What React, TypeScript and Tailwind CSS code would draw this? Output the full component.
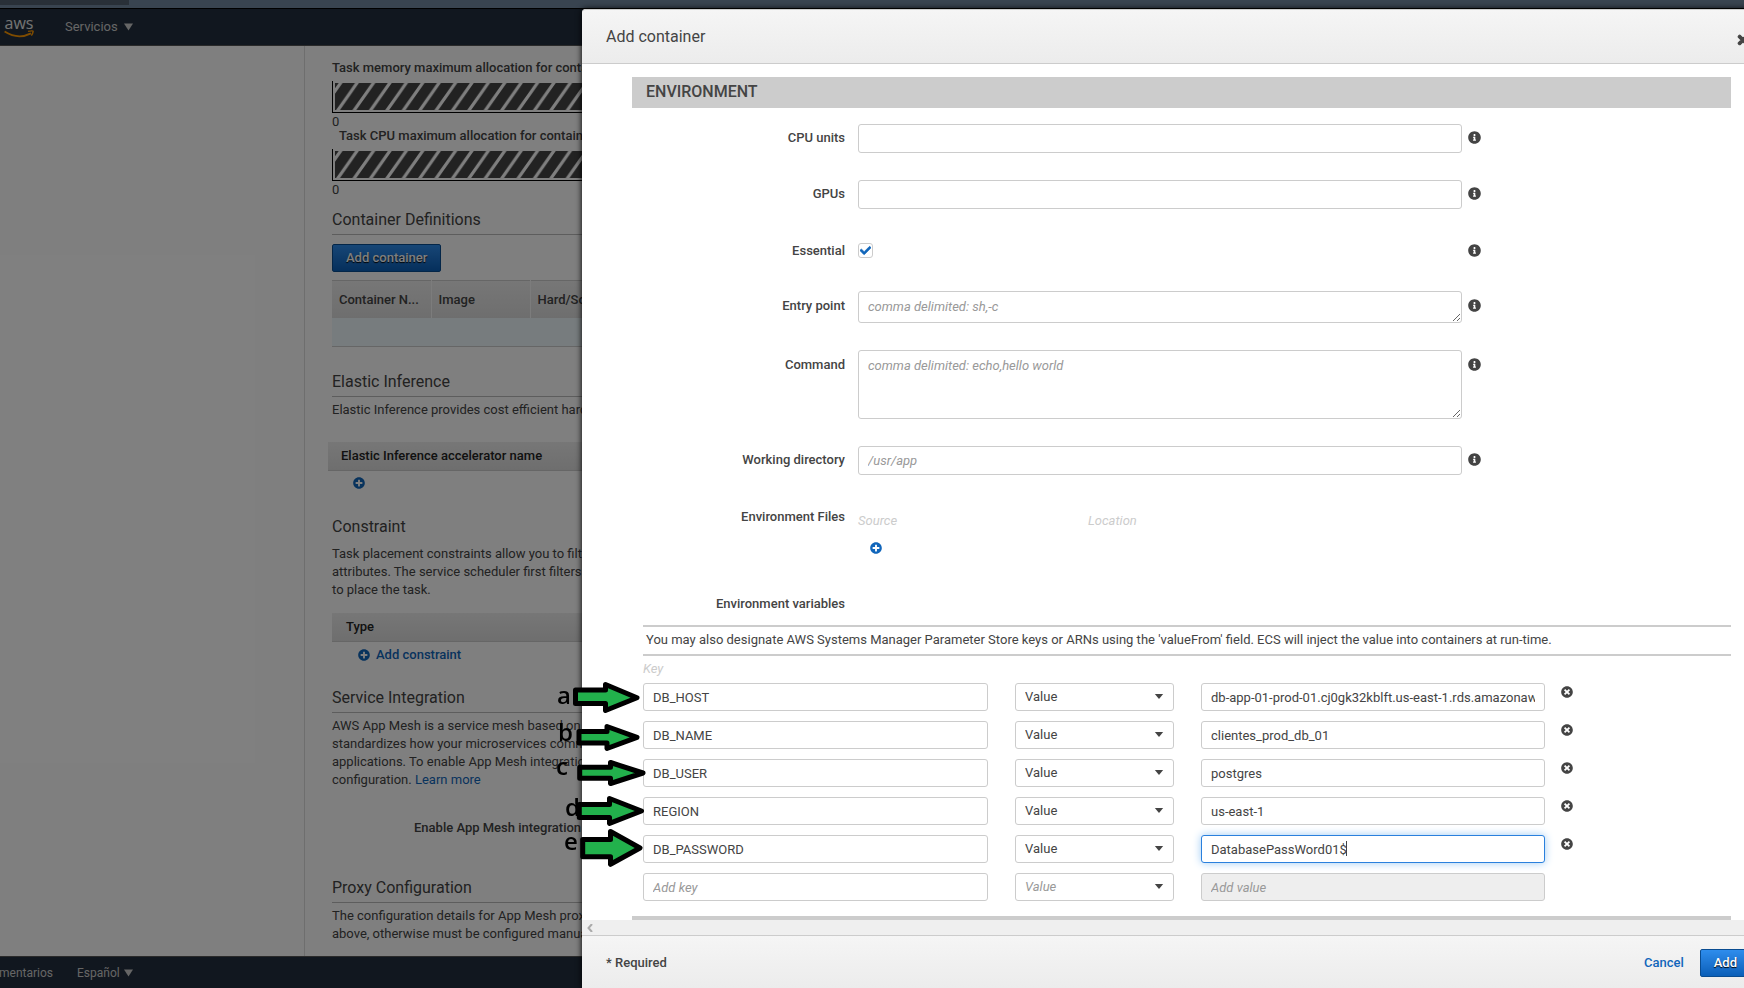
import { useState } from "react";
import type { ReactNode } from "react";
import { FaCheck, FaPlusCircle, FaInfoCircle, FaTimesCircle, FaTimes } from "react-icons/fa";

const fieldClass =
  "block w-full rounded-[3px] border border-[#ccc] bg-white px-[9px] text-[13px] text-[#444] outline-none placeholder:italic placeholder:text-[#999]";

const initialVariables = [
  { key: "DB_HOST", value: "db-app-01-prod-01.cj0gk32kblft.us-east-1.rds.amazonaws.com" },
  { key: "DB_NAME", value: "clientes_prod_db_01" },
  { key: "DB_USER", value: "postgres" },
  { key: "REGION", value: "us-east-1" },
  { key: "DB_PASSWORD", value: "DatabasePassWord01$" },
];

const arrows = [
  { letter: "a", place: "left-[557px] top-[679px]", points: "575.5,690 605.5,690 605.5,684.5 637,697.7 605.5,710.5 605.5,703.5 575.5,703.5" },
  { letter: "b", place: "left-[558px] top-[716px]", points: "579,731.5 607,731.5 607,726.5 637,737.3 607,748.5 607,743 579,743" },
  { letter: "c", place: "left-[556px] top-[750px]", points: "579.7,767.3 610.5,767.3 610.5,762.5 643,773 610.5,783.5 610.5,778.3 579.7,778.3" },
  { letter: "d", place: "left-[565px] top-[791px]", points: "579.3,804.5 609.5,804.5 609.5,798.5 641.5,811 609.5,823.3 609.5,817.5 579.3,817.5" },
  { letter: "e", place: "left-[564px] top-[825px]", points: "582.7,839.5 610.5,839.5 610.5,831.5 640,848 610.5,864.3 610.5,856.7 582.7,856.7" },
];

function Caret({ className }: { className: string }) {
  return (
    <svg viewBox="0 0 10 8" className={className} aria-hidden="true">
      <path d="M0 0h10L5 8z" fill="currentColor" />
    </svg>
  );
}

function AwsLogo() {
  return (
    <a href="#" aria-label="AWS" className="flex w-[30px] flex-col items-center">
      <span className="font-['Open_Sans',sans-serif] text-[16px] leading-[13px] font-medium text-[#e8e8e8]">aws</span>
      <svg viewBox="0 0 30 8" className="h-2 w-[30px]" fill="none" stroke="#ff9900" aria-hidden="true">
        <path d="M.6 1.6 Q14 10 27 3.4" strokeWidth="1.8" />
        <path d="M24 1.4 Q30 .1 29 2 Q28.6 4 27.4 5.6" strokeWidth="1.4" />
      </svg>
    </a>
  );
}

function MemoryBar({ title, indent }: { title: string; indent?: boolean }) {
  const id = indent ? "cpu-stripes" : "memory-stripes";
  return (
    <div className="h-[68px]">
      <div className={indent ? "pl-[7px] text-[13px] leading-[26px] font-medium" : "text-[13px] leading-[26px] font-medium"}>{title}</div>
      <div className="h-[32px] border-b border-l border-black pt-[2px] pl-[2px]">
        <svg className="h-[27px] w-full" aria-hidden="true">
          <defs>
            <pattern id={id} width="16.4" height="27" patternUnits="userSpaceOnUse">
              <rect width="17" height="27" fill="#444" />
              <path d="M1.6 29 L23.4 -2 M-14.8 29 L7 -2 M-31.2 29 L-9.4 -2 M18 29 L39.8 -2" stroke="#fff" strokeWidth="3.2" />
            </pattern>
          </defs>
          <rect width="100%" height="27" fill={`url(#${id})`} />
        </svg>
      </div>
      <div className="text-[13px] leading-[18px]">0</div>
    </div>
  );
}

function Page() {
  return (
    <div className="flex h-full flex-col bg-white text-[#444]">
      <header className="flex h-[37px] shrink-0 items-center gap-[31px] border-b border-[#555] bg-[#232f3e] pl-1 text-[#ccc]">
        <AwsLogo />
        <button type="button" className="flex items-center gap-[6px] text-[13px]">
          Servicios
          <Caret className="h-2 w-[9px]" />
        </button>
      </header>
      <div className="flex min-h-0 flex-1">
        <nav className="w-[305px] shrink-0 border-r border-[#ddd]" />
        <main className="min-w-0 flex-1 overflow-hidden pt-[9px] pl-[27px] text-[13px] whitespace-nowrap">
          <MemoryBar title="Task memory maximum allocation for container memory reservation" />
          <MemoryBar title="Task CPU maximum allocation for containers" indent />

          <h2 className="mt-[17px] border-b border-[#bbb] pb-[2px] text-[16px] leading-[24px]">Container Definitions</h2>
          <button type="button" className="mt-[9px] block h-[28px] rounded-[2px] border border-[#094c91] bg-gradient-to-b from-[#2e8ded] to-[#0a5fb8] px-[13px] font-medium text-white [text-shadow:0_1px_1px_#000]">
            Add container
          </button>
          <table className="mt-2 w-full table-fixed border-t border-b border-[#ccc] text-left">
            <thead>
              <tr className="h-[37px] bg-gradient-to-b from-[#eee] to-[#ddd]">
                <th className="w-[99px] border-r border-[#f8f8f8] px-[7px] font-medium">Container N...</th>
                <th className="w-[99px] border-r border-[#f8f8f8] px-[7px] font-medium">Image</th>
                <th className="px-[7px] font-medium">Hard/Soft memory limits (MiB)</th>
              </tr>
            </thead>
            <tbody>
              <tr className="h-[29px] bg-[#eff8fd]">
                <td colSpan={3} />
              </tr>
            </tbody>
          </table>

          <h2 className="mt-[23px] border-b border-[#bbb] pb-[2px] text-[16px] leading-[24px]">Elastic Inference</h2>
          <p className="mt-[4px] leading-[18px]">Elastic Inference provides cost efficient hardware acceleration</p>
          <div className="mt-[23px] -ml-1 h-[29px] border-b border-[#ccc] bg-gradient-to-b from-[#eee] to-[#ddd] pl-[13px] leading-[28px] font-medium text-[#222]">
            Elastic Inference accelerator name
          </div>
          <button type="button" aria-label="Add accelerator" className="mt-[6px] ml-[21px] block text-[#1166bb]">
            <FaPlusCircle size={12} />
          </button>

          <h2 className="mt-[26px] text-[16px] leading-[24px]">Constraint</h2>
          <p className="mt-[6px] leading-[18px]">
            Task placement constraints allow you to filter the container instances
            <br />
            attributes. The service scheduler first filters the container instances
            <br />
            to place the task.
          </p>
          <div className="mt-[14px] h-[29px] border-b border-[#ccc] bg-gradient-to-b from-[#eee] to-[#ddd] pl-[14px] leading-[28px] font-medium text-[#222]">
            Type
          </div>
          <button type="button" className="mt-1 ml-[26px] flex h-[18px] items-center gap-[6px] font-medium text-[#1166bb]">
            <FaPlusCircle size={12} />
            Add constraint
          </button>

          <h2 className="mt-[22px] border-b border-[#bbb] pb-[2px] text-[16px] leading-[24px]">Service Integration</h2>
          <p className="mt-[4px] leading-[18px]">
            AWS App Mesh is a service mesh based on the Envoy proxy that
            <br />
            standardizes how your microservices communicate with
            <br />
            applications. To enable App Mesh integration, complete the
            <br />
            configuration.{" "}
            <a href="#" className="text-[#1166bb]">
              Learn more
            </a>
          </p>
          <div className="mt-[30px] ml-[82px] leading-[18px] font-medium">Enable App Mesh integration</div>

          <h2 className="mt-[39px] border-b border-[#bbb] pb-[2px] text-[16px] leading-[24px]">Proxy Configuration</h2>
          <p className="mt-[4px] leading-[18px]">
            The configuration details for App Mesh proxy are listed
            <br />
            above, otherwise must be configured manually.
          </p>
        </main>
      </div>
      <footer className="flex h-8 shrink-0 items-center border-t border-[#555] bg-[#232f3e] text-[12px] text-[#ccc]">
        <div className="flex w-[53px] justify-end overflow-hidden">
          <a href="#">Comentarios</a>
        </div>
        <button type="button" className="ml-6 flex items-center gap-[4px]">
          Español
          <Caret className="h-2 w-[9px]" />
        </button>
      </footer>
    </div>
  );
}

function FormRow({
  label,
  htmlFor,
  info = true,
  lowered = false,
  children,
}: {
  label: string;
  htmlFor?: string;
  info?: boolean;
  lowered?: boolean;
  children?: ReactNode;
}) {
  return (
    <div className={`grid grid-cols-[226px_minmax(0,604fr)_minmax(0,269fr)] ${lowered ? "[&>:is(label,:last-child)]:mt-px" : ""}`}>
      <label htmlFor={htmlFor} className="pr-[13px] text-right leading-[27px] font-medium">
        {label}
      </label>
      <div>{children}</div>
      <div className="pt-[7px] pl-[6px]">
        {info && (
          <button type="button" aria-label={`About ${label}`} className="block">
            <FaInfoCircle size={13} />
          </button>
        )}
      </div>
    </div>
  );
}

function VariableRow({ name, value, focused = false, onRemove }: { name?: string; value?: string; focused?: boolean; onRemove?: () => void }) {
  const isNew = name === undefined;
  const [restingCaret, setRestingCaret] = useState(focused);
  const hideRestingCaret = () => setRestingCaret(false);
  return (
    <div className="grid grid-cols-[minmax(0,372fr)_186px_minmax(0,344fr)_minmax(0,186fr)]">
      <div className="pr-[27px]">
        <input aria-label="Key" defaultValue={name} placeholder="Add key" className={`${fieldClass} h-[28px]`} />
      </div>
      <div className="relative mr-[27px] h-[28px]">
        <select
          aria-label="Value type"
          className={`${fieldClass} h-[28px] appearance-none ${isNew ? "text-[#999] italic" : ""}`}
        >
          <option>Value</option>
          <option>ValueFrom</option>
        </select>
        <svg viewBox="0 0 10 6" className="pointer-events-none absolute top-[11px] right-[10px] h-[5px] w-[10px]" aria-hidden="true">
          <path d="M0 0h10L5 6z" fill="#444" />
        </svg>
      </div>
      <div className="relative">
        <input
          aria-label="Value"
          defaultValue={value}
          placeholder="Add value"
          disabled={isNew}
          autoFocus={focused}
          onKeyDown={hideRestingCaret}
          onMouseDown={hideRestingCaret}
          onBlur={hideRestingCaret}
          className={`${fieldClass} h-[28px] focus:border-[#2a80dd] focus:shadow-[0_0_8px_#9ccaf5] disabled:bg-[#eee] ${restingCaret ? "caret-transparent" : ""}`}
        />
        {restingCaret && <span className="absolute top-[6px] left-[145px] h-[15px] w-px bg-[#444]" />}
      </div>
      <div className="pt-[3px] pl-4">
        {!isNew && (
          <button type="button" aria-label={`Remove ${name}`} className="block" onClick={onRemove}>
            <FaTimesCircle size={12} />
          </button>
        )}
      </div>
    </div>
  );
}

function AddContainerDialog() {
  const [variables, setVariables] = useState(initialVariables);
  const [essential, setEssential] = useState(true);
  return (
    <section
      role="dialog"
      aria-label="Add container"
      className="absolute top-[9px] -right-[30px] bottom-0 left-[582px] flex flex-col rounded-tl-[4px] bg-white text-[13px] text-[#444] shadow-[0_0_6px_#000]"
    >
      <header className="flex h-[55px] shrink-0 items-center justify-between rounded-tl-[4px] border-t border-b border-[#ccc] bg-gradient-to-b from-[#f5f5f5] to-[#ececec] pr-6 pl-6">
        <h1 className="text-[16px]">Add container</h1>
        <button type="button" aria-label="Close" className="pt-[6px]">
          <FaTimes size={14} stroke="currentColor" strokeWidth={40} />
        </button>
      </header>

      <div className="flex min-h-0 flex-1 flex-col overflow-hidden pt-[13px] pr-[43px] pl-[50px]">
        <h2 className="h-[31px] shrink-0 bg-[#ccc] pl-[14px] text-[16px] leading-[29px] font-medium">ENVIRONMENT</h2>
        <div className="mt-4 flex flex-col gap-[27px]">
          <FormRow label="CPU units" htmlFor="cpu">
            <input id="cpu" className={`${fieldClass} h-[29px]`} />
          </FormRow>
          <FormRow label="GPUs" htmlFor="gpus">
            <input id="gpus" className={`${fieldClass} h-[29px]`} />
          </FormRow>
          <FormRow label="Essential" htmlFor="essential" lowered>
            <span className="relative mt-[7px] block h-[21px] w-[15px]">
              <input
                id="essential"
                type="checkbox"
                checked={essential}
                onChange={(event) => setEssential(event.target.checked)}
                className="block h-[15px] w-[15px] appearance-none rounded-[3px] border border-[#ccc]"
              />
              {essential && (
                <FaCheck size={11} stroke="currentColor" strokeWidth={30} className="pointer-events-none absolute top-[2px] left-[2px] text-[#1166bb]" />
              )}
            </span>
          </FormRow>
          <FormRow label="Entry point" htmlFor="entry" lowered>
            <textarea id="entry" placeholder="comma delimited: sh,-c" className={`${fieldClass} h-[32px] py-[6px] leading-[18px]`} />
          </FormRow>
          <FormRow label="Command" htmlFor="command" lowered>
            <textarea id="command" placeholder="comma delimited: echo,hello world" className={`${fieldClass} h-[69px] py-[6px] leading-[18px]`} />
          </FormRow>
          <FormRow label="Working directory" htmlFor="workdir">
            <input id="workdir" placeholder="/usr/app" className={`${fieldClass} h-[29px]`} />
          </FormRow>
          <FormRow label="Environment Files" info={false} lowered>
            <div className="h-[61px] pt-[10px]">
              <div className="grid grid-cols-[230px_1fr] leading-[18px] text-[#ccc] italic">
                <span>Source</span>
                <span>Location</span>
              </div>
              <button type="button" aria-label="Add environment file" className="mt-3 ml-3 block text-[#1166bb]">
                <FaPlusCircle size={12} />
              </button>
            </div>
          </FormRow>
          <FormRow label="Environment variables" info={false} />
        </div>

        <div className="mt-2 ml-[11px]">
          <p className="h-[31px] border-t-2 border-b-2 border-[#ccc] pl-[3px] leading-[25px]">
            You may also designate AWS Systems Manager Parameter Store keys or ARNs using the 'valueFrom' field. ECS will inject the value into containers at run-time.
          </p>
          <div className="h-[27px] leading-[26px] text-[#ccc] italic">Key</div>
          <div className="flex flex-col gap-[10px]">
            {variables.map((item) => (
              <VariableRow
                key={item.key}
                name={item.key}
                value={item.value}
                focused={item.key === "DB_PASSWORD"}
                onRemove={() => setVariables(variables.filter((other) => other.key !== item.key))}
              />
            ))}
            <VariableRow />
          </div>
        </div>
        <div className="mt-[15px] h-[31px] shrink-0 bg-[#ccc]" />
      </div>

      <div className="flex h-[15px] shrink-0 items-center bg-[#efefef] pl-[5px] text-[#aaa]">
        <svg viewBox="0 0 6 8" className="h-2 w-[6px]" fill="none" stroke="currentColor" strokeWidth="2" aria-hidden="true">
          <path d="M5 0 L1.5 4 L5 8" />
        </svg>
      </div>
      <footer className="flex h-[53px] shrink-0 items-center justify-between border-t border-[#ccc] bg-gradient-to-b from-[#f5f5f5] to-[#ececec] pt-[2px] pr-[23px] pl-6 font-medium">
        <span>* Required</span>
        <div className="flex items-center gap-4">
          <button type="button" className="text-[#1166bb]">
            Cancel
          </button>
          <button type="button" className="h-[28px] rounded-[2px] border border-[#094c91] bg-gradient-to-b from-[#2e8ded] to-[#0a5fb8] px-[13px] text-white [text-shadow:0_1px_1px_#000]">
            Add
          </button>
        </div>
      </footer>
    </section>
  );
}

export default function App() {
  return (
    <div className="relative flex h-screen min-h-[988px] flex-col overflow-hidden font-[Roboto,sans-serif]">
      <div className="h-2 shrink-0 bg-[#394450]">
        <div className="h-[5px] w-[129px] bg-[#293038]" />
      </div>
      <div className="relative min-h-0 flex-1 border-t border-black">
        <Page />
        <div className="absolute inset-0 bg-black/50" />
      </div>
      <AddContainerDialog />
      <svg className="pointer-events-none absolute inset-0 h-full w-full" fill="#22b14c" stroke="#000" strokeWidth="5" strokeLinejoin="round" aria-hidden="true">
        {arrows.map((arrow) => (
          <polygon key={arrow.letter} points={arrow.points} />
        ))}
      </svg>
      {arrows.map((arrow) => (
        <span key={arrow.letter} className={`absolute font-['Open_Sans',sans-serif] text-[24px] leading-[32px] font-semibold text-black ${arrow.place}`}>
          {arrow.letter}
        </span>
      ))}
    </div>
  );
}
